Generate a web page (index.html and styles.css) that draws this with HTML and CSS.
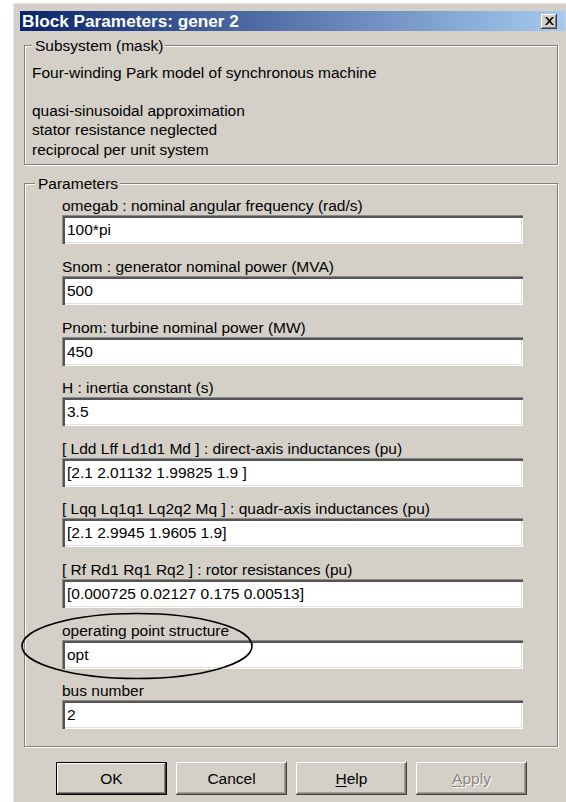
FILE: index.html
```html
<!DOCTYPE html>
<html lang="en">
<head>
<meta charset="utf-8">
<title>Block Parameters: gener 2</title>
<link rel="stylesheet" href="styles.css">
</head>
<body>
<div class="window">
  <div class="titlebar">
    <span class="title">Block Parameters: gener 2</span>
    <span class="close" aria-label="Close">
      <svg width="9" height="8" viewBox="0 0 9 8"><path d="M0 0h2l2.5 2.8L7 0h2L5.5 4 9 8H7L4.5 5.2 2 8H0l3.5-4z" fill="#000"/></svg>
    </span>
  </div>

  <fieldset class="group mask">
    <legend>Subsystem (mask)</legend>
    <p class="desc lead">Four-winding Park model of synchronous machine</p>
    <p class="desc">quasi-sinusoidal approximation</p>
    <p class="desc">stator resistance neglected</p>
    <p class="desc">reciprocal per unit system</p>
  </fieldset>

  <fieldset class="group params">
    <legend>Parameters</legend>
    <div class="rows">
      <div class="row"><div class="label">omegab : nominal angular frequency (rad/s)</div><div class="field">100*pi</div></div>
      <div class="row"><div class="label">Snom : generator nominal power (MVA)</div><div class="field">500</div></div>
      <div class="row"><div class="label">Pnom: turbine nominal power (MW)</div><div class="field">450</div></div>
      <div class="row"><div class="label">H : inertia constant (s)</div><div class="field">3.5</div></div>
      <div class="row"><div class="label">[ Ldd Lff Ld1d1 Md ] : direct-axis inductances (pu)</div><div class="field">[2.1 2.01132 1.99825 1.9 ]</div></div>
      <div class="row"><div class="label">[ Lqq Lq1q1 Lq2q2 Mq ] : quadr-axis inductances (pu)</div><div class="field">[2.1 2.9945 1.9605 1.9]</div></div>
      <div class="row"><div class="label">[ Rf Rd1 Rq1 Rq2 ] : rotor resistances (pu)</div><div class="field">[0.000725 0.02127 0.175 0.00513]</div></div>
      <div class="row"><div class="label">operating point structure</div><div class="field">opt</div></div>
      <div class="row"><div class="label">bus number</div><div class="field">2</div></div>
    </div>
  </fieldset>

  <div class="buttons">
    <button class="btn default" type="button">OK</button>
    <button class="btn" type="button">Cancel</button>
    <button class="btn" type="button"><u>H</u>elp</button>
    <button class="btn disabled" type="button" disabled><u>A</u>pply</button>
  </div>
</div>

<!-- hand-drawn ring around the operating point field -->
<svg class="ring" width="236" height="72" viewBox="0 0 236 72">
  <ellipse cx="117" cy="35" rx="115" ry="32.5" fill="none" stroke="#000" stroke-width="1.6"/>
</svg>
</body>
</html>
```

FILE: styles.css
```css
html, body {
  margin: 0;
  background: #fff;
  overflow: hidden;
}

body {
  position: relative;
  width: 566px;
  height: 802px;
  font-family: "Liberation Sans", Arial, sans-serif;
  font-size: 15.5px;
  color: #000;
}

.window {
  margin: 3px 0 0 13px;
  width: 553px;
  box-sizing: border-box;
  background: #d4d0c8;
  border-top: 1px solid #ebe9e4;
  border-left: 1px solid #ebe9e4;
  padding: 7px 1px 20px 6px;
}

/* caption bar */
.titlebar {
  height: 20px;
  display: flex;
  align-items: center;
  justify-content: space-between;
  padding: 0 8px 0 2px;
  background: linear-gradient(to right, #0a246a, #a6caf0);
}

.title {
  color: #fff;
  font-weight: bold;
  font-size: 17.2px;
  line-height: 20px;
}

.close {
  width: 16px;
  height: 15px;
  display: flex;
  align-items: center;
  justify-content: center;
  background: #d4d0c8;
  box-shadow: inset -1px -1px #404040, inset 1px 1px #fff, inset -2px -2px #808080;
}

/* etched group boxes */
.group {
  margin: 0 0 0 4px;
  width: 534px;
  min-width: 0;
  box-sizing: border-box;
  border: 1px solid #808080;
  box-shadow: inset 1px 1px #fff, 1px 1px #fff;
}

.group legend {
  background: #d4d0c8;
  line-height: 19px;
  padding: 0 2px 0 3px;
}

.mask {
  margin-top: 4.5px;
  padding: 8px 8px 5px 7px;
}

.desc {
  margin: 0;
  line-height: 19.3px;
}

.desc.lead {
  margin-bottom: 19.3px;
}

.params {
  margin-top: 9.5px;
  padding: 3px 8px 17px 10px;
}

.rows {
  display: flex;
  flex-direction: column;
  gap: 12.6px;
  padding-left: 27px;
}

.label {
  line-height: 19px;
}

.field {
  width: 461px;
  height: 29px;
  box-sizing: border-box;
  display: flex;
  align-items: center;
  padding: 1px 4px 0 5px;
  background: #fff;
  box-shadow: inset 1px 1px #8a8a8a, inset 3px 3px #555, inset -1px -1px #fff, inset -2px -2px #e2e0db;
}

/* dialog buttons */
.buttons {
  display: flex;
  gap: 9px;
  margin: 15px 0 0 36px;
}

.btn {
  width: 111px;
  height: 33px;
  padding: 0;
  border: 0;
  background: #d4d0c8;
  font: inherit;
  color: #000;
  box-shadow: inset -1px -1px #404040, inset 1px 1px #fff, inset -2px -2px #808080, inset -3px -3px #a09c95;
}

.btn.default {
  box-shadow: inset 0 0 0 1px #000, inset -2px -2px #404040, inset 2px 2px #fff, inset -3px -3px #808080;
}

.btn u {
  text-underline-offset: 2px;
}

.btn.disabled {
  color: #8a8780;
  text-shadow: 1px 1px #fff;
}

.ring {
  position: absolute;
  left: 20px;
  top: 611px;
}
```
